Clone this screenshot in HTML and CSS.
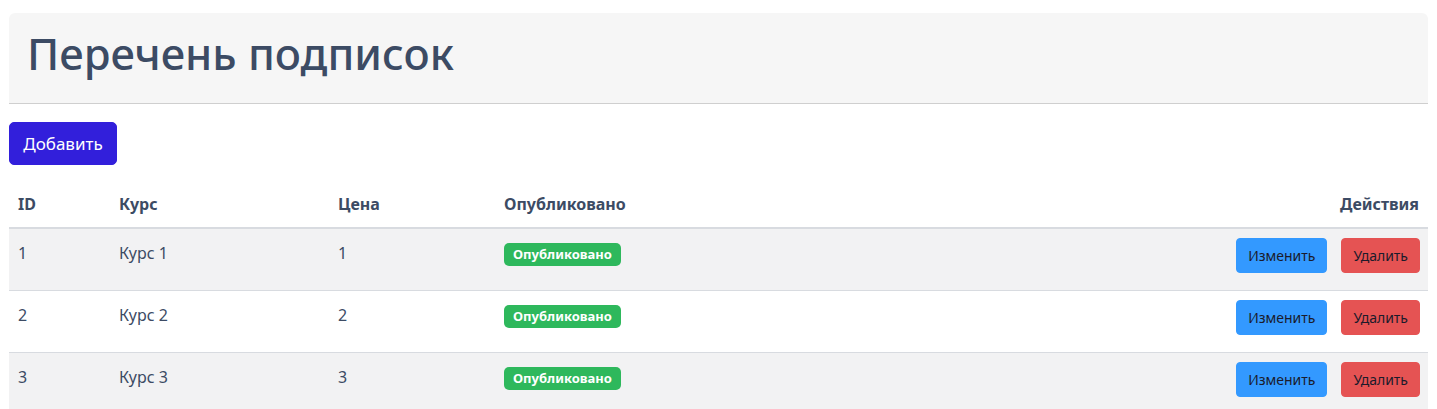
FILE: index.html
```html
<!DOCTYPE html>
<html lang="ru">
<head>
<meta charset="utf-8">
<title>Перечень подписок</title>
<link rel="stylesheet" href="styles.css">
</head>
<body>
<div class="page">
  <header class="page-header">
    <h1 class="page-title">Перечень подписок</h1>
  </header>
  <div class="toolbar">
    <button class="btn btn-primary btn-lg">Добавить</button>
  </div>
  <table class="table">
    <thead>
      <tr>
        <th class="col-id">ID</th>
        <th class="col-course">Курс</th>
        <th class="col-price">Цена</th>
        <th class="col-pub">Опубликовано</th>
        <th class="col-actions">Действия</th>
      </tr>
    </thead>
    <tbody>
      <tr class="stripe">
        <td>1</td><td>Курс 1</td><td>1</td>
        <td><span class="badge">Опубликовано</span></td>
        <td class="actions"><div class="action-group"><button class="btn btn-info">Изменить</button><button class="btn btn-danger">Удалить</button></div></td>
      </tr>
      <tr>
        <td>2</td><td>Курс 2</td><td>2</td>
        <td><span class="badge">Опубликовано</span></td>
        <td class="actions"><div class="action-group"><button class="btn btn-info">Изменить</button><button class="btn btn-danger">Удалить</button></div></td>
      </tr>
      <tr class="stripe">
        <td>3</td><td>Курс 3</td><td>3</td>
        <td><span class="badge">Опубликовано</span></td>
        <td class="actions"><div class="action-group"><button class="btn btn-info">Изменить</button><button class="btn btn-danger">Удалить</button></div></td>
      </tr>
    </tbody>
  </table>
</div>
</body>
</html>
```
FILE: styles.css
```css
* { box-sizing: border-box; }
body {
  margin: 0;
  background: #fff;
  font-family: "Noto Sans", "Open Sans", sans-serif;
  color: #3c4b64;
  font-size: 16px;
  line-height: 1.5;
}
.page {
  padding: 13px 9px 0;
}
.page-header {
  background: #f6f6f6;
  border-radius: 6px 6px 0 0;
  border-bottom: 1px solid #cfcfcf;
  height: 91px;
  padding: 14px 0 0 18px;
}
.page-title {
  margin: 0;
  font-size: 43.5px;
  font-weight: 500;
  line-height: 52px;
  color: #3c4b64;
}
.toolbar {
  margin-top: 18px;
}
.btn {
  font-family: inherit;
  border: 1px solid transparent;
  cursor: pointer;
  display: inline-block;
}
.btn-lg {
  font-size: 17px;
  line-height: 25px;
  padding: 8px 13px;
  border-radius: 5px;
  height: 43px;
  width: 108px;
}
.btn-primary {
  background: #321fdb;
  border-color: #321fdb;
  color: #fff;
}
.table {
  margin-top: 15px;
  width: 100%;
  border-collapse: collapse;
}
.table th {
  text-align: left;
  font-weight: 700;
  padding: 12px 9px 11px;
  border-bottom: 2px solid #d8dbe0;
  vertical-align: bottom;
}
.table td {
  padding: 12px 9px;
  vertical-align: top;
  border-top: 1px solid #d8dbe0;
  height: 62px;
}
.table tbody tr:first-child td { border-top: none; }
.col-id { width: 101px; }
.col-course { width: 219px; }
.col-price { width: 166px; }
.table th.col-actions { text-align: right; }
.stripe td { background: #f2f2f3; }
.badge {
  display: inline-block;
  background: #2eb85c;
  color: #fff;
  font-size: 13px;
  font-weight: 700;
  line-height: 13px;
  padding: 5px 9px;
  border-radius: 5px;
}
.table td.actions {
  padding: 9px 8px 17px;
}
.action-group {
  display: flex;
  justify-content: flex-end;
  gap: 14px;
}
.action-group .btn {
  font-size: 14px;
  line-height: 21px;
  padding: 6px 11px;
  border-radius: 4px;
  height: 35px;
  color: #1b1b2b;
}
.btn-info {
  background: #39f;
  border-color: #39f;
}
.btn-danger {
  background: #e55353;
  border-color: #e55353;
}
```
